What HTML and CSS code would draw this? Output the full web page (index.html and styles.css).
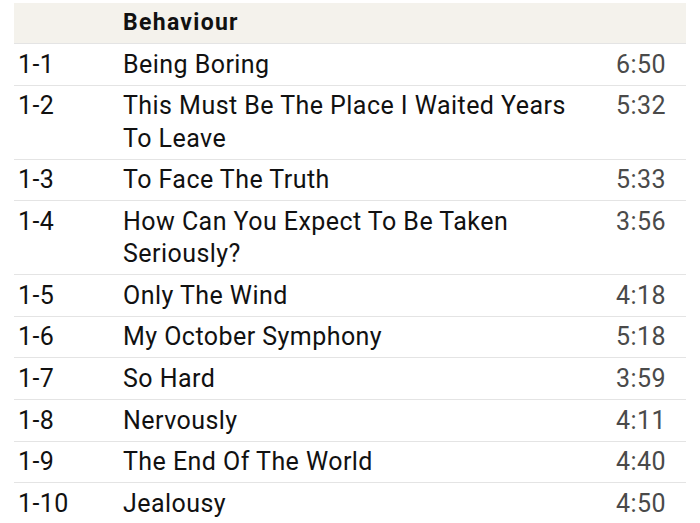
FILE: index.html
```html
<!DOCTYPE html>
<html>
<head>
<meta charset="utf-8">
<link rel="stylesheet" href="styles.css">
</head>
<body>
<table class="tracks">
  <colgroup>
    <col class="col-num">
    <col class="col-title">
    <col class="col-time">
  </colgroup>
  <thead>
    <tr class="head-row">
      <th class="num"></th>
      <th class="title">Behaviour</th>
      <th class="time"></th>
    </tr>
  </thead>
  <tbody>
    <tr><td class="num">1-1</td><td class="title">Being Boring</td><td class="time">6:50</td></tr>
    <tr><td class="num">1-2</td><td class="title">This Must Be The Place I Waited Years To Leave</td><td class="time">5:32</td></tr>
    <tr><td class="num">1-3</td><td class="title">To Face The Truth</td><td class="time">5:33</td></tr>
    <tr><td class="num">1-4</td><td class="title">How Can You Expect To Be Taken Seriously?</td><td class="time">3:56</td></tr>
    <tr><td class="num">1-5</td><td class="title">Only The Wind</td><td class="time">4:18</td></tr>
    <tr><td class="num">1-6</td><td class="title">My October Symphony</td><td class="time">5:18</td></tr>
    <tr><td class="num">1-7</td><td class="title">So Hard</td><td class="time">3:59</td></tr>
    <tr><td class="num">1-8</td><td class="title">Nervously</td><td class="time">4:11</td></tr>
    <tr><td class="num">1-9</td><td class="title">The End Of The World</td><td class="time">4:40</td></tr>
    <tr><td class="num">1-10</td><td class="title">Jealousy</td><td class="time">4:50</td></tr>
  </tbody>
</table>
</body>
</html>
```
FILE: styles.css
```css
html, body {
  margin: 0;
  padding: 0;
  background: #ffffff;
}
body {
  padding: 3px 14px 0 14px;
  font-family: Roboto, "Liberation Sans", sans-serif;
  color: #111111;
}
.tracks {
  width: 672px;
  border-collapse: collapse;
  table-layout: fixed;
}
.col-num { width: 105px; }
.col-time { width: 96px; }
.tracks td, .tracks th {
  padding: 4.6px 4px 3.6px 4px;
  vertical-align: top;
  text-align: left;
  font-size: 25px;
  letter-spacing: 0.45px;
  line-height: 32.4px;
  border-bottom: 1px solid #e4e4e4;
}
.head-row th {
  background: #f4f2ec;
  font-size: 23px;
  font-weight: 700;
  letter-spacing: 1.3px;
  line-height: 32px;
  padding-top: 4px;
  padding-bottom: 4px;
}
.tracks .time {
  text-align: right;
  padding-right: 20px;
  color: #4a4a4a;
}
```
